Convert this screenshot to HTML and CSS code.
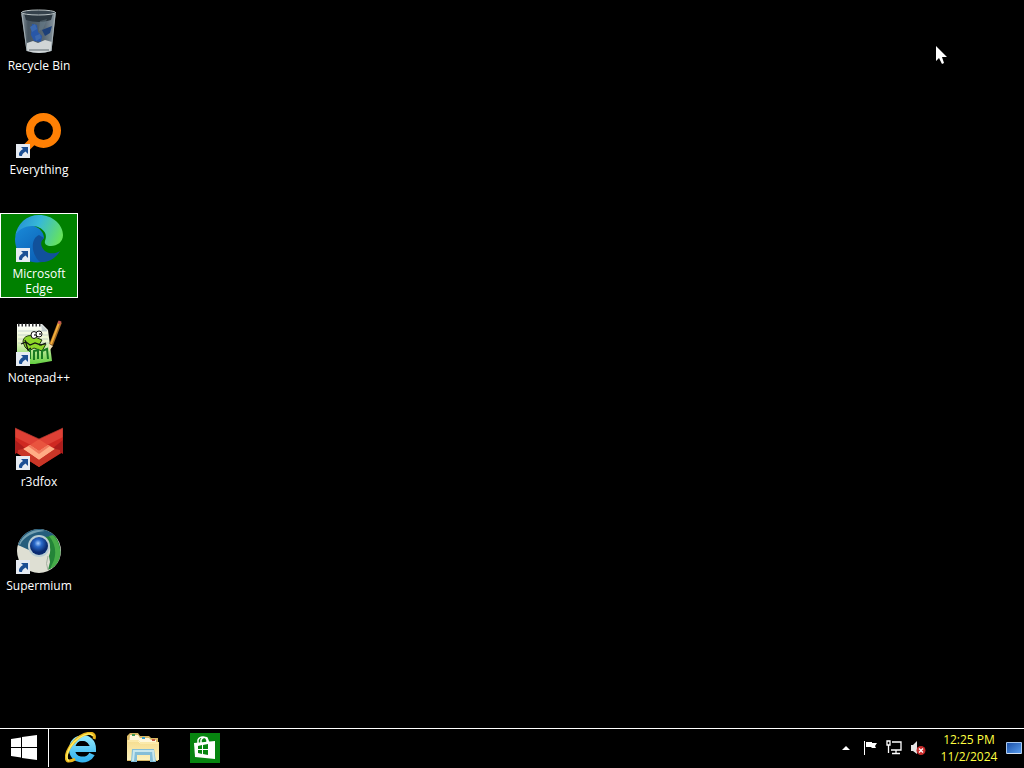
FILE: index.html
```html
<!DOCTYPE html>
<html lang="en">
<head>
<meta charset="utf-8">
<title>Desktop</title>
<link rel="stylesheet" href="styles.css">
</head>
<body>
<svg class="defs" aria-hidden="true">
  <defs>
    <linearGradient id="glass" x1="0" x2="1"><stop offset="0" stop-color="#8a979e"/><stop offset=".2" stop-color="#46545f"/><stop offset=".65" stop-color="#566673"/><stop offset="1" stop-color="#8d9aa2"/></linearGradient>
    <linearGradient id="edgeTop" x1="0" y1=".3" x2="1" y2=".6"><stop offset="0" stop-color="#258fd4"/><stop offset=".45" stop-color="#37b9d8"/><stop offset="1" stop-color="#66e35c"/></linearGradient>
    <linearGradient id="edgeMid" x1="0" y1="0" x2=".6" y2="1"><stop offset="0" stop-color="#1a8bd8"/><stop offset="1" stop-color="#0c62b8"/></linearGradient>
    <linearGradient id="page" x1="0" y1="0" x2="0" y2="1"><stop offset="0" stop-color="#ffffff"/><stop offset=".45" stop-color="#e9f5c8"/><stop offset="1" stop-color="#63ce40"/></linearGradient>
    <radialGradient id="orb" cx=".45" cy=".35"><stop offset="0" stop-color="#a6cdff"/><stop offset=".4" stop-color="#2868c8"/><stop offset="1" stop-color="#0a2a70"/></radialGradient>
    <linearGradient id="ie" x1="0" y1="0" x2="0" y2="1"><stop offset="0" stop-color="#8be5fc"/><stop offset="1" stop-color="#35b4ef"/></linearGradient>
    <linearGradient id="folder" x1="0" y1="0" x2="0" y2="1"><stop offset="0" stop-color="#f5dc8e"/><stop offset="1" stop-color="#fcf1bd"/></linearGradient>
    <linearGradient id="screen" x1="0" y1="0" x2="1" y2="1"><stop offset="0" stop-color="#184da4"/><stop offset="1" stop-color="#5b9ff0"/></linearGradient>
    <symbol id="shortcut" viewBox="0 0 14 14">
      <path fill="#e6ebf2" d="M0 0h14v14H0z"/>
      <path fill="#1c4f94" d="M5 3h7v7l-2.500-2.500C7 9 6 10.500 6 12H3.500C2 9.500 4 7 7 5z"/>
    </symbol>
  </defs>
</svg>

<main class="desktop">
  <button class="shortcut" type="button">
    <svg class="shortcut-icon" viewBox="0 0 48 48" aria-hidden="true">
      <path fill="url(#glass)" d="M6 5l5.500 39q13 4 25 0L41 5z"/>
      <path fill="#2a363f" d="M9 6h29l-2 7q-12 4-25 0z"/>
      <path fill="#2857a8" d="M17 17l5 1 1 7 4 4-1 6-7-1-3-6z"/>
      <path fill="#3b68ae" d="M15 20l5-3 2 5-5 3zM20 29l5-2 1 4-5 3z"/>
      <path fill="#1c3f78" d="M27 23l10-4-2 7-5 3z"/>
      <path fill="#718693" d="M25 14l7-2-4 10-4 2z" opacity=".4"/>
      <path fill="#d0d5d6" d="M12 36l6-2 5 2 7-3 7 2-1 9q-12 4-24 0z"/>
      <path stroke="#5b666c" stroke-width="1" d="M14 43h20"/>
      <ellipse cx="23.500" cy="5.500" rx="17" ry="2.500" fill="#35424c" stroke="#bcc5c7" stroke-width="1"/>
      <path fill="none" stroke="#a5b0b5" d="M7 7l5 37M40 7l-4 37"/>
    </svg>
    <span class="shortcut-label">Recycle Bin</span>
  </button>

  <button class="shortcut" type="button">
    <svg class="shortcut-icon" viewBox="0 0 48 48" aria-hidden="true">
      <path stroke="#ff8004" stroke-width="8" d="M20 28l-9 9"/>
      <circle cx="28.500" cy="19.500" r="13.500" fill="#000" stroke="#ff8004" stroke-width="8"/>
      <use href="#shortcut" x="1" y="33" width="14" height="14"/>
    </svg>
    <span class="shortcut-label">Everything</span>
  </button>

  <button class="shortcut shortcut-selected" type="button">
    <svg class="shortcut-icon" viewBox="0 0 48 48" aria-hidden="true">
      <path fill="url(#edgeMid)" d="M0 24C1 12 10 9 19 11c6 2 10 7 10 12l-8 8 6 16C10 50 0 38 0 24z"/>
      <path fill="#11519b" d="M24 20c-8 3-9 18 1 27 9 1 17-5 20-11-6 4-15 3-18-4-2-4 0-7 2-9z"/>
      <path fill="url(#edgeTop)" d="M0 22C2 8 12 0 24 0c14 0 24 10 24 20 0 7-6 11-12 11-4 0-7-2-6-5 4-9-5-15-13-15C9 11 2 15 0 22z"/>
      <use href="#shortcut" x="1" y="33" width="14" height="14"/>
    </svg>
    <span class="shortcut-label">Microsoft Edge</span>
  </button>

  <button class="shortcut" type="button">
    <svg class="shortcut-icon" viewBox="0 0 48 48" aria-hidden="true">
      <path fill="url(#page)" d="M2 5h25l6 6 4 31-17 3H2z"/>
      <path fill="#c9d2d2" d="M26 5l1 7h6z"/>
      <path stroke="#333" stroke-width="3" stroke-dasharray="1.500 2" d="M3 6h23"/>
      <path stroke="#a9bcc0" stroke-width=".6" d="M3 12h29M3 16h30M3 20h30M3 24h31"/>
      <path fill="#8dd629" stroke="#233b12" d="M8 23c0-6 7-8 12-5l7 3-3 5 7-1-4 7-8-3-5 3-4-4z"/>
      <ellipse cx="19" cy="16" rx="3" ry="3.500" fill="#fff" stroke="#111"/>
      <ellipse cx="24" cy="15" rx="3" ry="3" fill="#fff" stroke="#111"/>
      <path fill="none" stroke="#111" stroke-width="1.200" d="M20 15v2M25 14v2M6 25l5-2 4 3 5-2 6 2 5-2M10 21l3 10 3-2"/>
      <path fill="none" stroke="#167921" stroke-width="2" d="M15 40V30m4 11v-9l4-1v9m4 0v-8l5-2 1 10"/>
      <path stroke="#a56c25" stroke-width="4" d="M45 3l-9 23"/>
      <path stroke="#f4ae3b" stroke-width="2" d="M44 4l-8 21"/>
      <path fill="#f5dfb4" d="M34 25l4 2-4 5z"/>
      <path stroke="#c45854" stroke-width="3" d="M44 5l1-3"/>
      <use href="#shortcut" x="1" y="33" width="14" height="14"/>
    </svg>
    <span class="shortcut-label">Notepad++</span>
  </button>

  <button class="shortcut" type="button">
    <svg class="shortcut-icon" viewBox="0 0 48 48" aria-hidden="true">
      <path fill="#cf2821" d="M0 5l24 11L48 5v24L24 44 0 29z"/>
      <path fill="#df4035" d="M0 5l24 11-8 6L0 14zM48 5L24 16l8 6 16-8z"/>
      <path fill="#ae1c1b" d="M0 17l10 8-10 6zM48 17l-10 8 10 6z"/>
      <path fill="#e9543f" d="M24 16l9 6-9 6-9-6z"/>
      <path fill="#ffad85" d="M8 26l7-4 9 6 9-6 7 4-16 11z"/>
      <path fill="#f27a5d" d="M15 22l9 6 9-6 2 1-11 8-11-8z"/>
      <path fill="#c93627" d="M3 27l5-1 16 11 16-11 5 1v3L24 44 3 30z"/>
      <path fill="none" stroke="#8f3029" stroke-width=".7" d="M0 5l24 11L48 5v24M0 5v24"/>
      <use href="#shortcut" x="1" y="33" width="14" height="14"/>
    </svg>
    <span class="shortcut-label">r3dfox</span>
  </button>

  <button class="shortcut" type="button">
    <svg class="shortcut-icon" viewBox="0 0 48 48" aria-hidden="true">
      <circle cx="24" cy="24" r="22" fill="#dedfd3"/>
      <path fill="#245d7c" d="M3 18C8 1 28-3 40 9l-6 3c-10-5-20 0-20 11z"/>
      <path fill="#73a0b2" d="M4 17C9 5 21 1 30 4 19 5 9 9 5 18z"/>
      <path fill="#238438" d="M29 10l11-1c9 12 7 28-7 34l2-8-1-6q4-10-5-19z"/>
      <path fill="#46ac48" d="M38 8c11 12 9 29-3 34l4-9q4-13-5-24z"/>
      <path fill="none" stroke="#a5aea0" d="M33 29q-3 8 0 14"/>
      <circle cx="24" cy="19" r="11" fill="#b9cdd3"/>
      <circle cx="24" cy="19" r="9" fill="url(#orb)"/>
      <use href="#shortcut" x="1" y="33" width="14" height="14"/>
    </svg>
    <span class="shortcut-label">Supermium</span>
  </button>
</main>

<footer class="taskbar">
  <button class="start" type="button" aria-label="Start">
    <svg width="26" height="26" viewBox="0 0 26 26" aria-hidden="true"><path fill="#fff" d="M0 4l10-1.500V12H0zM11 2l15-2v12H11zM0 13h10v9.500L0 21zM11 13h15v12l-15-2z"/></svg>
  </button>
  <nav class="pinned" aria-label="Pinned apps">
    <button class="pin" type="button" aria-label="Internet Explorer">
      <svg width="32" height="32" viewBox="0 0 32 32" aria-hidden="true">
        <path fill="none" stroke="url(#ie)" stroke-width="6" d="M6 17h22C28 2 7 3 7 17c0 13 16 13 20 5"/>
        <path fill="#000" d="M11 14q1-5 6-5t6 5z"/>
        <path fill="none" stroke="#e9b51b" stroke-width="3" d="M29 7C32-2 18 0 9 10 1 18-1 29 4 29q3 0 6-2"/>
        <path fill="none" stroke="#ffed60" stroke-width="1.500" d="M28 4C25-1 15 4 9 10 2 18 0 27 4 29"/>
      </svg>
    </button>
    <button class="pin" type="button" aria-label="File Explorer">
      <svg width="32" height="32" viewBox="0 0 32 32" aria-hidden="true">
        <path fill="#d9b966" d="M1 3l2-2h8l2 3h9l2 2h7v23H0V4z"/>
        <path fill="#fff8dc" d="M3 3h8l2 3h9l2 2h5v4H2z"/>
        <path fill="#429b56" d="M5 2h3v2H5z"/><path fill="#399fcb" d="M15 5h3v2h-3z"/><path fill="#c65b43" d="M25 7h3v2h-3z"/>
        <path fill="url(#folder)" d="M0 8h11l2 2h19v18H0z"/>
        <path fill="none" stroke="#fff4bf" d="M1 9h10l2 2h18"/>
        <path fill="#84bed8" d="M5 17h22l2 13h-6v-7H10v7H4z"/>
        <path fill="none" stroke="#c7e7ee" stroke-width="2" d="M6 29l1-10h19l1 10"/>
      </svg>
    </button>
    <button class="pin" type="button" aria-label="Store">
      <svg width="30" height="30" viewBox="0 0 30 30" aria-hidden="true">
        <path fill="#078510" d="M0 0h30v30H0z"/>
        <path fill="none" stroke="#fff" stroke-width="1.500" d="M8 11V7q1-3 5-3 3 0 4 3v3M11 10V7q2-4 6-2l2 5"/>
        <path fill="#fff" d="M4 10l21-2v18L5 24z"/>
        <path fill="#078510" d="M8 13l4-1v4H8zM13 12l5-1v5h-5zM8 17h4v4l-4-1zM13 17h5v5l-5-1z"/>
      </svg>
    </button>
  </nav>
  <div class="tray">
    <button class="tray-button" type="button" aria-label="Show hidden icons"><svg width="8" height="4" viewBox="0 0 8 4" aria-hidden="true"><path fill="#fff" d="M4 0l4 4H0z"/></svg></button>
    <button class="tray-button" type="button" aria-label="Action Center"><svg width="16" height="16" viewBox="0 0 16 16" aria-hidden="true"><path fill="#fff" d="M2 1h1v14H2zM4 2h6v1h5l-2 3 1 2h-4L9 7H4z"/></svg></button>
    <button class="tray-button" type="button" aria-label="Network"><svg width="16" height="16" viewBox="0 0 16 16" aria-hidden="true"><path fill="none" stroke="#fff" stroke-width="1.300" d="M6 2h9v8H5M10 10v3M6 13.500h8M1 1h3v4H1zM2.500 5v8"/></svg></button>
    <button class="tray-button" type="button" aria-label="Volume muted"><svg width="16" height="16" viewBox="0 0 16 16" aria-hidden="true"><path fill="#e5e5e5" d="M1 5h2l4-4v13l-4-3H1z"/><circle cx="11" cy="10.500" r="4.500" fill="#c72b2b"/><path stroke="#fff" stroke-width="1.300" d="M9 8.500l4 4m0-4l-4 4"/></svg></button>
  </div>
  <button class="clock" type="button"><span>12:25 PM</span><span>11/2/2024</span></button>
  <button class="show-desktop" type="button" aria-label="Show desktop"><svg width="16" height="13" viewBox="0 0 16 13" aria-hidden="true"><path fill="url(#screen)" stroke="#a9c8ee" d="M.5.5h15v11H.5z"/><path fill="#d5e1ef" d="M1 11h14v1H1z"/></svg></button>
</footer>

<svg class="pointer" width="12" height="19" viewBox="0 0 12 19" aria-hidden="true"><path fill="#fff" d="M0 0v15l3-3 3 6 2-1-2-6h5z"/></svg>
</body>
</html>
```

FILE: styles.css
```css
* { box-sizing: border-box; }

body {
  display: flex;
  flex-direction: column;
  min-height: 100vh;
  margin: 0;
  background: #000;
  color: #fff;
  font-family: "Open Sans", "Noto Sans", sans-serif;
  font-size: 12px;
}

button {
  padding: 0;
  border: 0;
  background: none;
  color: inherit;
  font: inherit;
}

svg { display: block; }

.defs {
  position: absolute;
  width: 0;
  height: 0;
}

.desktop {
  display: grid;
  flex: 1;
  grid-template-columns: 78px;
  grid-auto-rows: 104px;
  align-content: start;
  align-items: start;
  padding-top: 5px;
}

.shortcut {
  display: flex;
  flex-direction: column;
  align-items: center;
  gap: 3px;
  padding: 1px 2px;
  border: 1px solid transparent;
}

.shortcut-selected {
  border-color: #fff;
  background: #008000;
}

.shortcut-icon {
  width: 48px;
  height: 48px;
}

.shortcut-label {
  line-height: 15px;
  text-align: center;
}

.taskbar {
  display: flex;
  height: 40px;
  padding-bottom: 1px;
  border-top: 1px solid #fff;
}

.start {
  display: grid;
  width: 49px;
  place-items: center;
  border-right: 1px solid #fff;
}

.pinned {
  display: flex;
  margin-left: 1px;
}

.pin {
  display: grid;
  width: 62px;
  place-items: center;
}

.tray {
  display: flex;
  margin-left: auto;
}

.tray-button {
  display: grid;
  width: 24px;
  place-items: center;
}

.clock {
  display: flex;
  flex-direction: column;
  justify-content: center;
  width: 74px;
  padding-left: 4px;
  color: #ffff40;
  line-height: 17px;
  text-align: center;
}

.show-desktop {
  display: grid;
  width: 20px;
  place-items: center;
}

.pointer {
  position: absolute;
  top: 46px;
  right: 76px;
}
```
